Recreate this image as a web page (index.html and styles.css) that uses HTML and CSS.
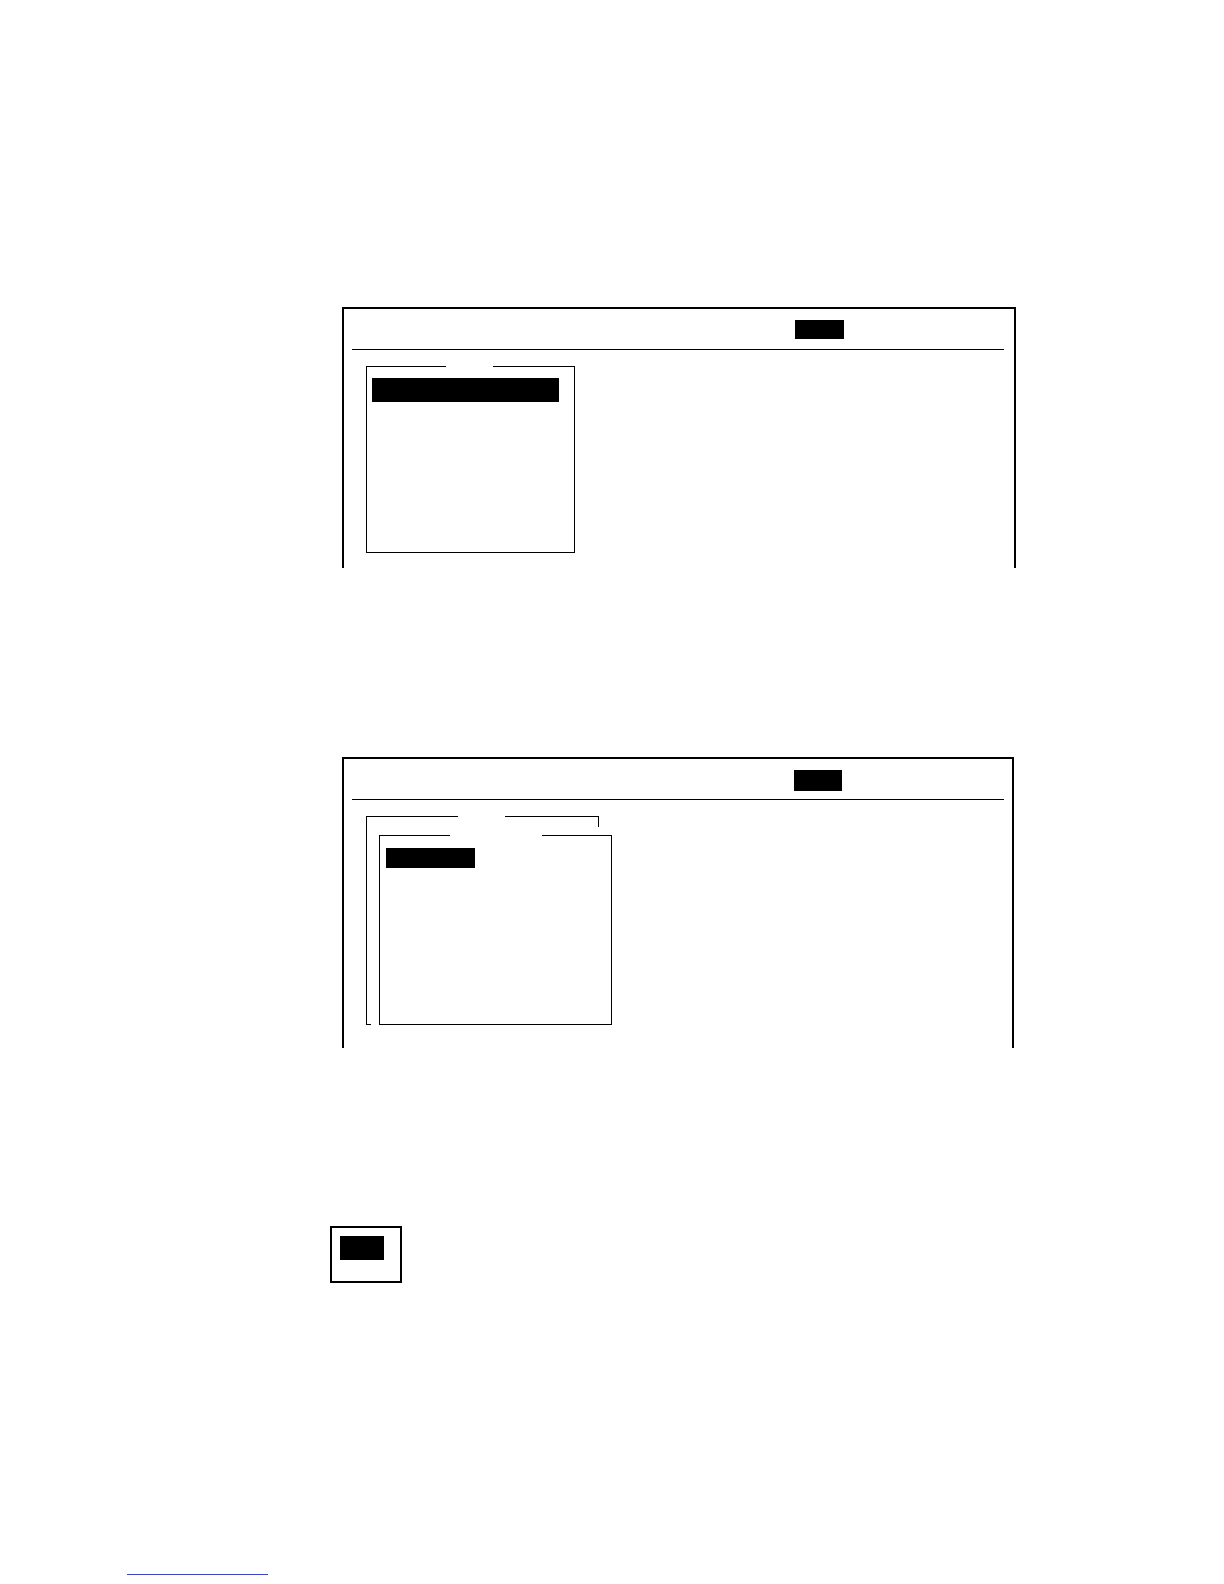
FILE: index.html
```html
<!DOCTYPE html>
<html lang="en">
<head>
<meta charset="utf-8">
<title>Menu screens</title>
<link rel="stylesheet" href="styles.css">
</head>
<body>
<main class="page">
  <section class="screen screen-one">
    <header class="screen-head">
      <span class="tag"></span>
    </header>
    <div class="divider"></div>
    <div class="screen-body">
      <div class="menu menu-one">
        <div class="menu-top">
          <span class="seg seg-left-one"></span>
          <span class="seg-gap seg-gap-one"></span>
          <span class="seg seg-fill"></span>
        </div>
        <div class="menu-inner">
          <div class="hl hl-one"></div>
        </div>
      </div>
    </div>
  </section>

  <section class="screen screen-two">
    <header class="screen-head">
      <span class="tag tag-two"></span>
    </header>
    <div class="divider"></div>
    <div class="screen-body body-two">
      <div class="bracket">
        <div class="bracket-top">
          <span class="seg seg-left-b"></span>
          <span class="seg-gap seg-gap-b"></span>
          <span class="seg seg-right-b"></span>
        </div>
        <div class="bracket-side">
          <div class="menu menu-two">
            <div class="menu-top">
              <span class="seg seg-left-two"></span>
              <span class="seg-gap seg-gap-two"></span>
              <span class="seg seg-fill"></span>
            </div>
            <div class="menu-inner inner-two">
              <div class="hl hl-two"></div>
            </div>
          </div>
        </div>
      </div>
    </div>
  </section>

  <section class="key">
    <div class="key-box"><span class="key-fill"></span></div>
  </section>

  <footer class="foot">
    <span class="foot-line"></span>
  </footer>
</main>
</body>
</html>
```

FILE: styles.css
```css
html, body {
  margin: 0;
  padding: 0;
  background: #ffffff;
  font-family: "Liberation Sans", Arial, sans-serif;
}

.page {
  display: flex;
  flex-direction: column;
  padding-top: 307px;
  width: 1224px;
  height: 1584px;
  box-sizing: border-box;
}

.screen {
  margin-left: 342px;
  width: 674px;
  height: 261px;
  box-sizing: border-box;
  border: 2px solid #000;
  border-bottom: none;
  display: flex;
  flex-direction: column;
}

.screen-two {
  margin-top: 189px;
  width: 672px;
  height: 291px;
}

.screen-head {
  height: 40px;
  display: flex;
  align-items: flex-start;
  padding-left: 451px;
  padding-top: 11px;
  box-sizing: border-box;
}

.tag {
  display: block;
  width: 49px;
  height: 19px;
  background: #000;
}

.tag-two {
  width: 48px;
  height: 21px;
  margin-left: -1px;
}

.divider {
  margin-left: 8px;
  width: 652px;
  height: 1px;
  background: #000;
}

.screen-body {
  padding-left: 22px;
  padding-top: 16px;
}

.menu {
  display: flex;
  flex-direction: column;
}

.menu-one {
  width: 209px;
}

.menu-top {
  display: flex;
  height: 1px;
}

.seg {
  display: block;
  height: 0;
  border-top: 1px solid #000;
}

.seg-gap {
  display: block;
}

.seg-fill {
  flex: 1;
}

.seg-left-one { width: 80px; }
.seg-gap-one { width: 47px; }

.menu-inner {
  box-sizing: border-box;
  height: 186px;
  border: 1px solid #000;
  border-top: none;
  padding: 11px 15px 0 5px;
}

.hl {
  background: #000;
}

.hl-one {
  height: 24px;
}

/* second screen: nested menu inside a bracket */
.body-two {
  padding-top: 16px;
}

.bracket {
  width: 233px;
  display: flex;
  flex-direction: column;
}

.bracket-top {
  display: flex;
  align-items: flex-start;
}

.seg-left-b {
  width: 92px;
  height: 11px;
  border-left: 1px solid #000;
  box-sizing: border-box;
}

.seg-gap-b { width: 47px; }

.seg-right-b {
  width: 94px;
  height: 11px;
  border-right: 1px solid #000;
  box-sizing: border-box;
}

.bracket-side {
  position: relative;
  border-left: 1px solid #000;
  margin-top: -11px;
  padding-top: 19px;
  padding-left: 12px;
}

.bracket-side::after {
  content: "";
  position: absolute;
  left: 0;
  bottom: 0;
  width: 4px;
  height: 0;
  border-bottom: 1px solid #000;
}

.menu-two {
  width: 233px;
}

.seg-left-two { width: 71px; }
.seg-gap-two { width: 92px; }

.inner-two {
  height: 189px;
  padding: 12px 0 0 6px;
}

.hl-two {
  width: 89px;
  height: 20px;
}

/* small key box */
.key {
  margin-top: 178px;
  margin-left: 330px;
}

.key-box {
  width: 72px;
  height: 57px;
  box-sizing: border-box;
  border: 2px solid #000;
  padding: 8px 0 0 8px;
}

.key-fill {
  display: block;
  width: 44px;
  height: 24px;
  background: #000;
}

.foot {
  margin-top: 291px;
  margin-left: 127px;
}

.foot-line {
  display: block;
  width: 141px;
  height: 1px;
  background: #3c46c8;
}
```
